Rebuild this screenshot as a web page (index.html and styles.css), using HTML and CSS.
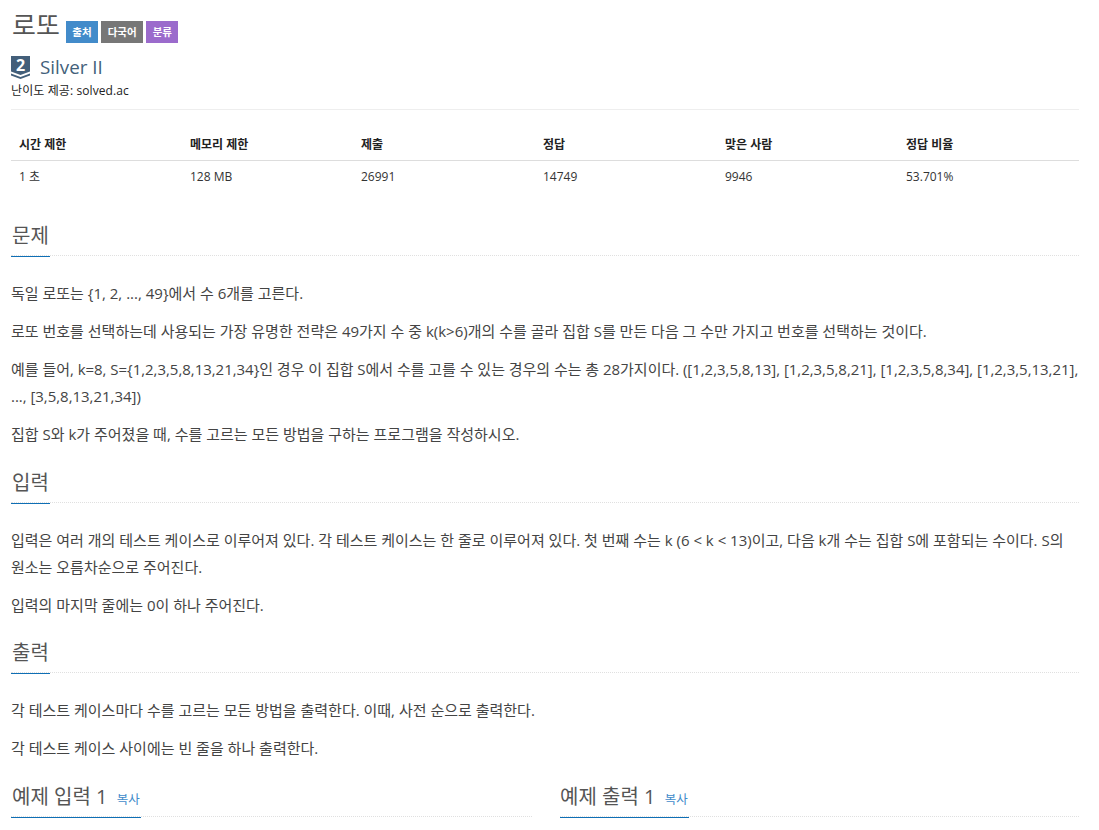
FILE: index.html
```html
<!DOCTYPE html>
<html lang="ko">
<head>
<meta charset="utf-8">
<title>로또</title>
<link rel="stylesheet" href="styles.css">
</head>
<body>
<div class="page">
  <div class="title-row">
    <h1 class="title">로또</h1>
    <span class="label blue">출처</span>
    <span class="label gray">다국어</span>
    <span class="label purple">분류</span>
  </div>
  <div class="tier">
    <svg class="tier-icon" viewBox="0 0 19 23" width="19" height="23" aria-hidden="true">
      <path d="M0 0H19V15.500L9.500 19L0 15.500Z" fill="#435f7a"/>
      <path d="M0 17.500L9.500 21L19 17.500V19.500L9.500 23L0 19.500Z" fill="#435f7a"/>
    </svg>
    <span class="tier-digit">2</span>
    <span class="tier-name">Silver II</span>
  </div>
  <div class="provider">난이도 제공: solved.ac</div>
  <hr class="rule">
  <table class="info">
    <thead>
      <tr><th class="c1">시간 제한</th><th class="c2">메모리 제한</th><th class="c3">제출</th><th class="c4">정답</th><th class="c5">맞은 사람</th><th class="c6">정답 비율</th></tr>
    </thead>
    <tbody>
      <tr><td>1 초</td><td>128 MB</td><td>26991</td><td>14749</td><td>9946</td><td>53.701%</td></tr>
    </tbody>
  </table>

  <section class="sec first">
    <div class="head"><h2>문제</h2></div>
    <div class="body">
      <p>독일 로또는 {1, 2, ..., 49}에서 수 6개를 고른다.</p>
      <p>로또 번호를 선택하는데 사용되는 가장 유명한 전략은 49가지 수 중 k(k&gt;6)개의 수를 골라 집합 S를 만든 다음 그 수만 가지고 번호를 선택하는 것이다.</p>
      <p class="tight">예를 들어, k=8, S={1,2,3,5,8,13,21,34}인 경우 이 집합 S에서 수를 고를 수 있는 경우의 수는 총 28가지이다. ([1,2,3,5,8,13], [1,2,3,5,8,21], [1,2,3,5,8,34], [1,2,3,5,13,21], ..., [3,5,8,13,21,34])</p>
      <p>집합 S와 k가 주어졌을 때, 수를 고르는 모든 방법을 구하는 프로그램을 작성하시오.</p>
    </div>
  </section>

  <section class="sec">
    <div class="head"><h2>입력</h2></div>
    <div class="body">
      <p>입력은 여러 개의 테스트 케이스로 이루어져 있다. 각 테스트 케이스는 한 줄로 이루어져 있다. 첫 번째 수는 k (6 &lt; k &lt; 13)이고, 다음 k개 수는 집합 S에 포함되는 수이다. S의 원소는 오름차순으로 주어진다.</p>
      <p>입력의 마지막 줄에는 0이 하나 주어진다.</p>
    </div>
  </section>

  <section class="sec">
    <div class="head"><h2>출력</h2></div>
    <div class="body">
      <p>각 테스트 케이스마다 수를 고르는 모든 방법을 출력한다. 이때, 사전 순으로 출력한다.</p>
      <p>각 테스트 케이스 사이에는 빈 줄을 하나 출력한다.</p>
    </div>
  </section>

  <div class="samples">
    <div class="head"><h2>예제 입력 1 <a class="copy">복사</a></h2></div>
    <div class="head"><h2>예제 출력 1 <a class="copy">복사</a></h2></div>
  </div>
</div>
</body>
</html>
```
FILE: styles.css
```css
* { box-sizing: border-box; }
html, body { margin: 0; padding: 0; background: #fff; overflow: hidden; height: 830px; }
body {
  font-family: "Open Sans", "Noto Sans CJK KR", sans-serif;
  font-size: 14px;
  line-height: 20px;
  color: #333;
}
.page { padding: 0 20px 0 11px; }

.title-row { display: flex; align-items: flex-end; height: 46px; }
.title { margin: 0 6px 2px 1px; font-size: 26px; font-weight: 400; line-height: 38px; color: #555; }
.label {
  height: 22px; margin-right: 3px; padding: 0 6.500px; margin-bottom: 3px;
  font-size: 10.500px; font-weight: 700; line-height: 22px; color: #fff;
}
.blue { background: #428bca; }
.gray { background: #777; }
.purple { background: #9b6bcc; }

.tier { position: relative; display: flex; align-items: center; height: 32px; margin-top: 5px; }
.tier-icon { flex: none; }
.tier-digit {
  position: absolute; left: 0; top: 4px; width: 19px; text-align: center;
  font-size: 16px; font-weight: 700; line-height: 20px; color: #fff;
}
.tier-name { margin-left: 10px; font-size: 18.800px; color: #435f7a; }
.provider { font-size: 12px; letter-spacing: 0.100px; line-height: 17px; color: #222; margin-top: -1px; }
.rule { margin: 10px 0 0; border: 0; border-top: 1px solid #eee; }

.info { width: 100%; margin-top: 18px; border-collapse: collapse; table-layout: fixed; font-size: 12px; }
.info th { height: 32px; padding: 2px 8px 0; text-align: left; font-weight: 700; color: #222; border-bottom: 1px solid #ddd; }
.info td { height: 31px; padding: 2px 8px 0; color: #333; }
.c1 { width: 171px; } .c2 { width: 171px; } .c3 { width: 182px; }
.c4 { width: 182px; } .c5 { width: 181px; }

.sec { margin-top: 20.500px; }
.sec.first { margin-top: 31px; }
.head { border-bottom: 1px dotted #e0e0e0; height: 34px; }
.head h2 {
  display: inline-block; margin: 0; height: 35px; padding: 0 1px;
  font-size: 20px; font-weight: 400; line-height: 28px; color: #555;
  border-bottom: 1px solid #0f6fb5;
}
.head + .head h2 { padding: 0 1px 0 0; }
.body { padding-top: 24px; font-size: 15px; color: #444; }
.body p { margin: 0 0 11px; line-height: 27px; }
.body .tight { letter-spacing: -0.030px; }

.samples { display: grid; grid-template-columns: 521px 519px; column-gap: 28px; margin-top: 21px; }
.copy { font-size: 12.500px; color: #428bca; margin-left: 4px; }
```
